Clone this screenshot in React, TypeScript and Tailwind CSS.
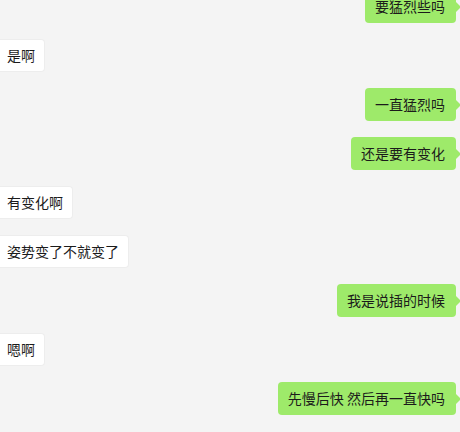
import React from "react";

type Msg = { text: string; mine: boolean };

const messages: Msg[] = [
  { text: "要猛烈些吗", mine: true },
  { text: "是啊", mine: false },
  { text: "一直猛烈吗", mine: true },
  { text: "还是要有变化", mine: true },
  { text: "有变化啊", mine: false },
  { text: "姿势变了不就变了", mine: false },
  { text: "我是说插的时候", mine: true },
  { text: "嗯啊", mine: false },
  { text: "先慢后快 然后再一直快吗", mine: true },
];

const Bubble = ({ msg }: { msg: Msg }) => {
  if (msg.mine) {
    return (
      <div className="flex justify-end pr-[4px]">
        <div className="relative h-[33px] flex items-center pl-[10px] pr-[11px] rounded-[4px] bg-[#9eea6a] text-[14px] text-[#1b1b1b]">
          {msg.text}
          <span className="absolute right-[-5px] top-1/2 -translate-y-1/2 w-0 h-0 border-y-[5px] border-y-transparent border-l-[5px] border-l-[#9eea6a]" />
        </div>
      </div>
    );
  }
  return (
    <div className="flex justify-start">
      <div className="h-[33px] flex items-center pl-[7px] pr-[9px] rounded-r-[4px] bg-white border-y border-r border-[#ededed] text-[14px] text-[#1b1b1b]">
        {msg.text}
      </div>
    </div>
  );
};

export default function App() {
  return (
    <div
      className="w-[460px] h-[432px] overflow-hidden bg-[#f4f4f4]"
      style={{ fontFamily: '"Noto Sans CJK SC", "Microsoft YaHei", sans-serif' }}
    >
      <div className="flex flex-col gap-[16px] mt-[-10px]">
        {messages.map((m, i) => (
          <Bubble key={i} msg={m} />
        ))}
      </div>
    </div>
  );
}
